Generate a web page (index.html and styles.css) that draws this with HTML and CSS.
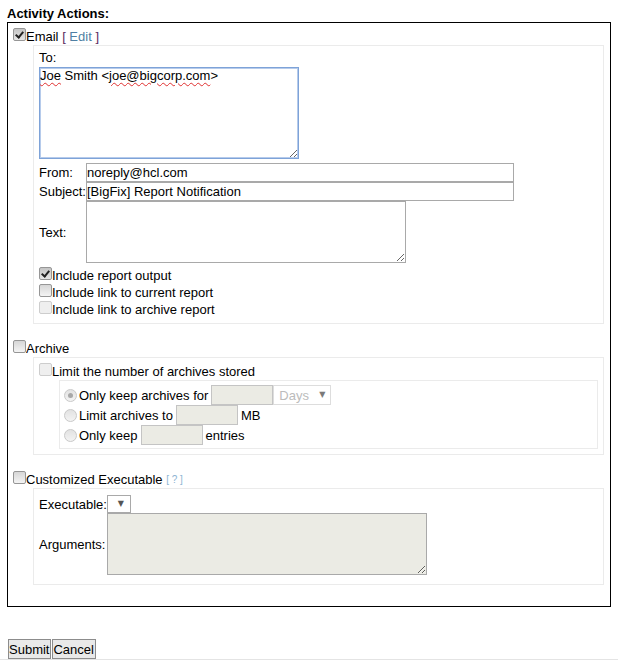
FILE: index.html
```html
<!DOCTYPE html>
<html lang="en">
<head>
    <meta charset="UTF-8">
    <meta name="viewport" content="width=device-width, initial-scale=1.0">
    <title>Activity Actions</title>
    <link rel="stylesheet" href="styles.css">
</head>
<body>
    <div class="page">
        <div class="heading">Activity Actions:</div>

        <div class="actions">
            <div class="action">
                <label class="check"><input type="checkbox" checked>Email&nbsp;<span class="bracket">[ <a href="#" class="edit-link">Edit</a> ]</span></label>
                <div class="panel email-panel">
                    <div class="field-label">To:</div>
                    <div class="to-box"><span class="misspelled">Joe</span> Smith &lt;<span class="misspelled">joe@bigcorp.com</span>&gt;</div>
                    <div class="field-grid">
                        <label>From:</label>
                        <input type="text" class="text-input" value="noreply@hcl.com">
                        <label>Subject:</label>
                        <input type="text" class="text-input" value="[BigFix] Report Notification">
                        <label>Text:</label>
                        <textarea class="text-area"></textarea>
                    </div>
                    <div class="options">
                        <label class="check"><input type="checkbox" checked>Include report output</label>
                        <label class="check"><input type="checkbox">Include link to current report</label>
                        <label class="check"><input type="checkbox" disabled>Include link to archive report</label>
                    </div>
                </div>
            </div>

            <div class="action">
                <label class="check"><input type="checkbox">Archive</label>
                <div class="panel archive-panel">
                    <label class="check"><input type="checkbox" disabled>Limit the number of archives stored</label>
                    <div class="limits">
                        <div class="limit">
                            <input type="radio" name="limit" checked disabled>Only keep archives for
                            <input type="text" class="num-input" disabled>
                            <span class="select-wrap days"><select disabled><option>Days</option></select></span>
                        </div>
                        <div class="limit">
                            <input type="radio" name="limit" disabled>Limit archives to
                            <input type="text" class="num-input" disabled>
                            <span class="unit">MB</span>
                        </div>
                        <div class="limit">
                            <input type="radio" name="limit" disabled>Only keep
                            <input type="text" class="num-input" disabled>
                            <span class="unit">entries</span>
                        </div>
                    </div>
                </div>
            </div>

            <div class="action">
                <label class="check"><input type="checkbox">Customized Executable&nbsp;<a href="#" class="help-link">[ ? ]</a></label>
                <div class="panel exec-panel">
                    <div class="field-grid">
                        <label>Executable:</label>
                        <span class="select-wrap exec"><select></select></span>
                        <label>Arguments:</label>
                        <textarea class="text-area" disabled></textarea>
                    </div>
                </div>
            </div>
        </div>

        <div class="buttons">
            <button type="submit">Submit</button>
            <button type="button">Cancel</button>
        </div>
    </div>
    <div class="page-end"></div>
</body>
</html>
```

FILE: styles.css
```css
* {
    box-sizing: border-box;
}

body {
    margin: 0;
    font-family: "Liberation Sans", Arial, sans-serif;
    font-size: 13px;
    color: #000;
    background-color: #fff;
}

.page {
    padding: 5px 7px 0;
}

.heading {
    font-weight: bold;
    line-height: 17px;
}

.actions {
    border: 1px solid #000;
    padding: 0 6px 21px 5px;
}

.action {
    margin-top: 16px;
}

.action:first-child {
    margin-top: 5px;
}

/* checkbox rows */
.check {
    display: flex;
    align-items: flex-start;
    height: 17px;
    line-height: 17px;
    white-space: nowrap;
}

.check input {
    margin-top: 1px;
}

.options .check input {
    margin-top: 0;
}

input[type="checkbox"],
input[type="radio"] {
    appearance: none;
    position: relative;
    flex: none;
    width: 13px;
    height: 13px;
    margin: 0;
    border: 1px solid #969696;
    background: linear-gradient(#d6d6d6, #f4f4f4);
}

input[type="checkbox"] {
    border-radius: 2px;
}

input[type="checkbox"]:checked {
    background: linear-gradient(#c4c4c4, #e6e6e6);
}

input[type="checkbox"]:checked::after {
    content: "";
    position: absolute;
    left: 3px;
    top: 1px;
    width: 3px;
    height: 6px;
    border: solid #222;
    border-width: 0 2px 2px 0;
    transform: rotate(40deg);
}

input[type="checkbox"]:disabled {
    border-color: #cdcdcd;
    background: #efefef;
}

input[type="radio"] {
    border-radius: 50%;
    margin-right: 2px;
}

input[type="radio"]:disabled {
    border-color: #c9c9c9;
    background: linear-gradient(#e2e2e2, #f3f3f3);
}

input[type="radio"]:checked::after {
    content: "";
    position: absolute;
    left: 3px;
    top: 3px;
    width: 5px;
    height: 5px;
    border-radius: 50%;
    background-color: #a8a8a8;
}

.bracket {
    color: #5b2c5e;
}

.edit-link {
    color: #4f7fa3;
    text-decoration: none;
}

.help-link {
    color: #8db4d3;
    font-size: 10px;
    text-decoration: none;
}

/* grouped panels */
.panel {
    border: 1px solid #ebebeb;
    margin-left: 20px;
    padding: 0 5px;
}

.email-panel {
    padding-top: 3px;
    padding-bottom: 5px;
}

.archive-panel {
    padding-top: 5px;
    padding-bottom: 5px;
}

.exec-panel {
    padding-top: 6px;
    padding-bottom: 9px;
}

.field-label {
    line-height: 17px;
}

.to-box {
    width: 260px;
    height: 92px;
    margin-top: 1px;
    padding: 0;
    border: 1px solid #7ea3d8;
    box-shadow: inset 0 0 0 1px #b6cbeb;
    line-height: 15px;
    overflow: auto;
    resize: both;
}

.misspelled {
    text-decoration: underline wavy #e03030;
    text-decoration-thickness: 1px;
    text-underline-offset: 2px;
}

.field-grid {
    display: grid;
    grid-template-columns: max-content max-content;
    align-items: center;
    justify-items: start;
}

.email-panel .field-grid {
    margin-top: 4px;
}

.field-grid label {
    line-height: 15px;
}

.text-input {
    width: 428px;
    height: 19px;
    margin: 0;
    padding: 0;
    border: 1px solid #a9a9a9;
    font: inherit;
    color: #000;
}

.text-area {
    display: block;
    width: 320px;
    height: 62px;
    margin: 0;
    padding: 0;
    border: 1px solid #a9a9a9;
    font: inherit;
}

.text-area:disabled {
    background-color: #ebebe4;
}

.options {
    margin-top: 4px;
}

/* archive limits */
.limits {
    border: 1px solid #ebebeb;
    margin-left: 20px;
    padding: 4px 0 3px 4px;
}

.limit {
    display: flex;
    align-items: center;
    height: 20px;
    white-space: nowrap;
}

.num-input {
    width: 62px;
    height: 20px;
    margin: 0 0 0 3px;
    padding: 0;
    border: 1px solid #c4c4c4;
    background-color: #ebebe4;
    font: inherit;
}

.unit {
    margin-left: 3px;
}

.select-wrap {
    position: relative;
    display: inline-flex;
}

.select-wrap select {
    appearance: none;
    margin: 0;
    padding: 0 0 0 5px;
    background-color: #fff;
    font: inherit;
}

.select-wrap::after {
    content: "\25BC";
    position: absolute;
    top: 50%;
    transform: translateY(-50%);
    font-family: "DejaVu Sans", sans-serif;
    font-size: 8px;
    line-height: 8px;
    pointer-events: none;
}

.days select {
    width: 58px;
    height: 20px;
    border: 1px solid #cfcfcf;
    color: #a0a0a0;
}

.days::after {
    right: 6px;
    color: #7a7a7a;
}

.exec select {
    width: 24px;
    height: 18px;
    border: 1px solid #a9a9a9;
}

.exec::after {
    right: 7px;
    color: #555;
}

.buttons {
    display: flex;
    gap: 1px;
    margin-top: 32px;
    padding-left: 1px;
}

.buttons button {
    height: 20px;
    margin: 0;
    padding: 0 1px 0 0;
    border: 1px solid #8c8c8c;
    border-radius: 0;
    background-color: #e9e9e9;
    color: #000;
    font: inherit;
}

.page-end {
    border-top: 1px solid #e4e4e4;
}
```
